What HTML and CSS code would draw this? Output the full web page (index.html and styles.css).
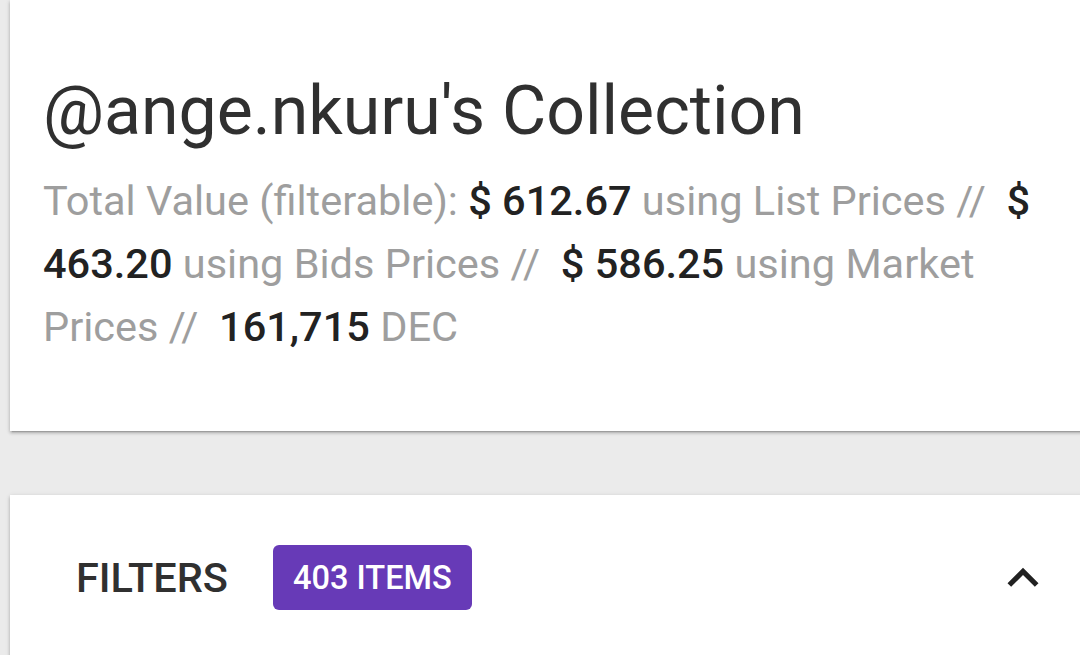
FILE: index.html
```html
<!DOCTYPE html>
<html>
<head>
<meta charset="utf-8">
<link rel="stylesheet" href="styles.css">
</head>
<body>
<div class="page">
  <section class="card summary">
    <h1 class="title">@ange.nkuru's Collection</h1>
    <p class="totals">Total Value (filterable): <b>$ 612.67</b> using List Prices // &nbsp;<b>$ 463.20</b> using Bids Prices // &nbsp;<b>$ 586.25</b> using Market Prices // &nbsp;<b>161,715</b> DEC</p>
  </section>
  <section class="card filters">
    <div class="filters-head">
      <div class="filters-left">
        <span class="filters-label">FILTERS</span>
        <span class="badge">403 ITEMS</span>
      </div>
      <svg class="chevron" viewBox="0 0 24 24" width="62" height="62"><path d="M12 8l-6 6 1.41 1.41L12 10.83l4.59 4.58L18 14z" fill="#212121"/></svg>
    </div>
  </section>
</div>
</body>
</html>
```
FILE: styles.css
```css
html, body {
  margin: 0;
  padding: 0;
  background: #ebebeb;
  overflow: hidden;
}
body {
  font-family: Roboto, "Liberation Sans", sans-serif;
  width: 1080px;
  height: 655px;
}
.page {
  padding-left: 10px;
  display: flex;
  flex-direction: column;
  gap: 64px;
}
.card {
  background: #fff;
  margin-right: -40px;
  box-shadow: 0 2px 3px rgba(0,0,0,0.2), 0 3px 1px -2px rgba(0,0,0,0.14), 0 1px 5px rgba(0,0,0,0.12);
}
.summary {
  padding: 75px 33px 73px 33px;
}
.title {
  margin: 0;
  font-size: 68px;
  font-weight: 400;
  line-height: 72px;
  color: #303030;
}
.totals {
  margin: 22px 0 0 0;
  font-size: 41.5px;
  line-height: 63px;
  color: #9e9e9e;
  max-width: 1005px;
}
.totals b {
  font-weight: 500;
  color: #222;
}
.filters {
  padding: 50px 66px 50px 66px;
}
.filters-head {
  display: flex;
  align-items: center;
  justify-content: space-between;
}
.filters-left {
  display: flex;
  align-items: center;
  gap: 45px;
}
.filters-label {
  font-size: 41.5px;
  font-weight: 500;
  color: #303030;
}
.badge {
  background: #673ab7;
  color: #fff;
  font-size: 32.6px;
  font-weight: 500;
  padding: 0 20px;
  height: 65px;
  display: flex;
  align-items: center;
  border-radius: 6px;
}
.chevron {
  display: block;
}
```
